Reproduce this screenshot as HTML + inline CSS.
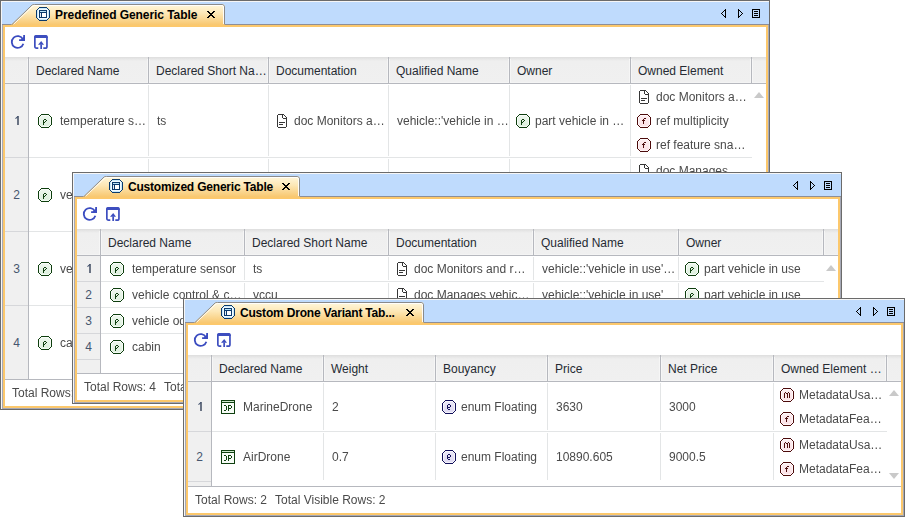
<!DOCTYPE html><html><head><meta charset="utf-8"><style>html,body{margin:0;padding:0;background:#fff;width:905px;height:517px;overflow:hidden;position:relative}.win{position:absolute;overflow:hidden}.r{position:absolute}.ic{position:absolute;display:block}.t{position:absolute;white-space:pre;font-family:"Liberation Sans", sans-serif;font-size:12px;line-height:14px}.g{will-change:transform}</style></head><body>
<div class="win" style="left:0px;top:0px;width:770px;height:410px">
<div class="r" style="left:0px;top:0px;width:770px;height:410px;background:#6b6b6b;"></div>
<div class="r" style="left:1px;top:1px;width:768px;height:408px;background:#f6f6f6;"></div>
<div class="r" style="left:2px;top:2px;width:767px;height:407px;background:#bfdbfd;"></div>
<div class="r" style="left:2px;top:24px;width:767px;height:385px;background:#a6a9b6;"></div>
<div class="r" style="left:2px;top:24px;width:767px;height:1px;background:#8e8e96;"></div>
<div class="r" style="left:3px;top:25px;width:765px;height:383px;background:#fcc86c;"></div>
<div class="r" style="left:5px;top:27px;width:761px;height:379px;background:#ffffff;"></div>
<svg class="ic" style="left:0;top:0" width="226" height="27" viewBox="0 0 226 27"><defs><linearGradient id="tg0" x1="0" y1="0" x2="0" y2="1"><stop offset="0" stop-color="#fff8df"/><stop offset="0.45" stop-color="#fde7b5"/><stop offset="1" stop-color="#f8c76f"/></linearGradient></defs><path d="M11 25L32 5Q33 4 35 4H222Q225 4 225 7V25Z" fill="url(#tg0)"/><path d="M12 24.5L32.2 4.9Q32.8 4.5 34.5 4.5H222Q224.5 4.5 224.5 7V24.5" fill="none" stroke="#8a8a8a" stroke-width="1"/><path d="M13.6 24.2L33 5.8Q33.5 5.5 34.5 5.5H222Q223.5 5.5 223.5 7V24" fill="none" stroke="#ffffff" stroke-width="1" opacity=".9"/></svg>
<div class="r" style="left:3px;top:25px;width:222px;height:2px;background:#fcc86c;"></div>
<svg class="ic" style="left:36px;top:7px" width="14" height="14" viewBox="0 0 14 14"><path d="M2.5 1H11.5L13 2.5V11.5L11.5 13H2.5L1 11.5V2.5Z" fill="#c9eafb"/><rect x="2.5" y="2.5" width="9" height="9" fill="none" stroke="#f2faff" stroke-width="1"/><rect x="4" y="4" width="6" height="1" fill="#b9e3f7"/><rect x="4" y="6" width="1" height="4" fill="#e6eef5"/><rect x="6" y="6" width="4" height="4" fill="#fff"/><path fill="#0b3a6c" shape-rendering="crispEdges" d="M3 0h8v1h-8zM2 1h1v1h-1zM11 1h1v1h-1zM1 2h1v1h-1zM12 2h1v1h-1zM0 3h1v1h-1zM3 3h8v1h-8zM13 3h1v1h-1zM0 4h1v1h-1zM3 4h1v1h-1zM10 4h1v1h-1zM13 4h1v1h-1zM0 5h1v1h-1zM3 5h8v1h-8zM13 5h1v1h-1zM0 6h1v1h-1zM3 6h1v1h-1zM5 6h1v1h-1zM10 6h1v1h-1zM13 6h1v1h-1zM0 7h1v1h-1zM3 7h1v1h-1zM5 7h1v1h-1zM10 7h1v1h-1zM13 7h1v1h-1zM0 8h1v1h-1zM3 8h1v1h-1zM5 8h1v1h-1zM10 8h1v1h-1zM13 8h1v1h-1zM0 9h1v1h-1zM3 9h1v1h-1zM5 9h1v1h-1zM10 9h1v1h-1zM13 9h1v1h-1zM0 10h1v1h-1zM3 10h8v1h-8zM13 10h1v1h-1zM1 11h1v1h-1zM12 11h1v1h-1zM2 12h1v1h-1zM11 12h1v1h-1zM3 13h8v1h-8z"/></svg>
<div class="t" style="left:55px;top:8px;color:#000;font-weight:bold;letter-spacing:-0.06px;">Predefined Generic Table</div>
<svg class="ic" style="left:207px;top:11px" width="8" height="7" viewBox="0 0 8 7"><path fill="#000" shape-rendering="crispEdges" d="M0 0h2v1h-2zM6 0h2v1h-2zM1 1h2v1h-2zM5 1h2v1h-2zM2 2h4v1h-4zM3 3h2v1h-2zM2 4h4v1h-4zM1 5h2v1h-2zM5 5h2v1h-2zM0 6h2v1h-2zM6 6h2v1h-2z"/></svg>
<svg class="ic" style="left:721px;top:9px" width="5" height="9" viewBox="0 0 5 9"><path fill="#000" shape-rendering="crispEdges" d="M4 0h1v1h-1zM3 1h2v1h-2zM2 2h1v1h-1zM4 2h1v1h-1zM1 3h1v1h-1zM4 3h1v1h-1zM0 4h1v1h-1zM4 4h1v1h-1zM1 5h1v1h-1zM4 5h1v1h-1zM2 6h1v1h-1zM4 6h1v1h-1zM3 7h2v1h-2zM4 8h1v1h-1z"/></svg><svg class="ic" style="left:738px;top:9px" width="5" height="9" viewBox="0 0 5 9"><path fill="#000" shape-rendering="crispEdges" d="M0 0h1v1h-1zM0 1h2v1h-2zM0 2h1v1h-1zM2 2h1v1h-1zM0 3h1v1h-1zM3 3h1v1h-1zM0 4h1v1h-1zM4 4h1v1h-1zM0 5h1v1h-1zM3 5h1v1h-1zM0 6h1v1h-1zM2 6h1v1h-1zM0 7h2v1h-2zM0 8h1v1h-1z"/></svg><svg class="ic" style="left:752px;top:9px" width="8" height="9" viewBox="0 0 8 9"><path fill="#000" shape-rendering="crispEdges" d="M0 0h8v1h-8zM0 1h1v1h-1zM7 1h1v1h-1zM0 2h1v1h-1zM2 2h4v1h-4zM7 2h1v1h-1zM0 3h1v1h-1zM7 3h1v1h-1zM0 4h1v1h-1zM2 4h4v1h-4zM7 4h1v1h-1zM0 5h1v1h-1zM7 5h1v1h-1zM0 6h1v1h-1zM2 6h4v1h-4zM7 6h1v1h-1zM0 7h1v1h-1zM7 7h1v1h-1zM0 8h8v1h-8z"/></svg>
<svg class="ic" style="left:10px;top:34px" width="16" height="16" viewBox="0 0 16 16"><path d="M13.34 9.72A5.9 5.9 0 1 1 12.91 5.23L14.1 6.1" fill="none" stroke="#3b4cc0" stroke-width="1.8"/><path d="M14.1 1.1V6.1H9.1" fill="none" stroke="#3b4cc0" stroke-width="1.8" stroke-linecap="butt"/><path d="M14.1 2.5V6.1H10.5Z" fill="#3b4cc0"/></svg>
<svg class="ic" style="left:34px;top:35px" width="14" height="14" viewBox="0 0 14 14"><path d="M4.3 13.15H2.6Q.85 13.15 .85 11.4V2.6Q.85 .85 2.6 .85H11.2Q12.95 .85 12.95 2.6V11.4Q12.95 13.15 11.2 13.15H9.3" fill="none" stroke="#3d4ebf" stroke-width="1.7"/><path d="M2.2 0H11.6Q13.8 0 13.8 2.2V2.9H0V2.2Q0 0 2.2 0Z" fill="#3d4ebf"/><path d="M7.2 6.1L10 9.8H4Z" fill="#3d4ebf"/><rect x="6.3" y="9.5" width="1.75" height="4.5" fill="#3d4ebf"/></svg>
<div class="r" style="left:5px;top:57px;width:761px;height:26px;background:#f0f0f0;background:linear-gradient(#dedede,#efefef 4px,#f0f0f0)"></div>
<div class="r" style="left:5px;top:83px;width:761px;height:1px;background:#b6b8be;"></div>
<div class="r" style="left:5px;top:82px;width:761px;height:1px;background:#f4f4f4;"></div>
<div class="r" style="left:27px;top:59px;width:1px;height:24px;background:#f6f6f6;"></div>
<div class="r" style="left:29px;top:59px;width:1px;height:24px;background:#f6f6f6;"></div>
<div class="r" style="left:28px;top:57px;width:1px;height:26px;background:#b6b8be;"></div>
<div class="r" style="left:147px;top:59px;width:1px;height:24px;background:#f6f6f6;"></div>
<div class="r" style="left:149px;top:59px;width:1px;height:24px;background:#f6f6f6;"></div>
<div class="r" style="left:148px;top:57px;width:1px;height:26px;background:#b6b8be;"></div>
<div class="r" style="left:267px;top:59px;width:1px;height:24px;background:#f6f6f6;"></div>
<div class="r" style="left:269px;top:59px;width:1px;height:24px;background:#f6f6f6;"></div>
<div class="r" style="left:268px;top:57px;width:1px;height:26px;background:#b6b8be;"></div>
<div class="r" style="left:387px;top:59px;width:1px;height:24px;background:#f6f6f6;"></div>
<div class="r" style="left:389px;top:59px;width:1px;height:24px;background:#f6f6f6;"></div>
<div class="r" style="left:388px;top:57px;width:1px;height:26px;background:#b6b8be;"></div>
<div class="r" style="left:508px;top:59px;width:1px;height:24px;background:#f6f6f6;"></div>
<div class="r" style="left:510px;top:59px;width:1px;height:24px;background:#f6f6f6;"></div>
<div class="r" style="left:509px;top:57px;width:1px;height:26px;background:#b6b8be;"></div>
<div class="r" style="left:629px;top:59px;width:1px;height:24px;background:#f6f6f6;"></div>
<div class="r" style="left:631px;top:59px;width:1px;height:24px;background:#f6f6f6;"></div>
<div class="r" style="left:630px;top:57px;width:1px;height:26px;background:#b6b8be;"></div>
<div class="r" style="left:750px;top:59px;width:1px;height:24px;background:#f6f6f6;"></div>
<div class="r" style="left:752px;top:59px;width:1px;height:24px;background:#f6f6f6;"></div>
<div class="r" style="left:751px;top:57px;width:1px;height:26px;background:#b6b8be;"></div>
<div class="t" style="left:36px;top:64px;color:#262b33;">Declared Name</div>
<div class="t" style="left:156px;top:64px;color:#262b33;">Declared Short Na…</div>
<div class="t" style="left:276px;top:64px;color:#262b33;">Documentation</div>
<div class="t" style="left:396px;top:64px;color:#262b33;">Qualified Name</div>
<div class="t" style="left:517px;top:64px;color:#262b33;">Owner</div>
<div class="t" style="left:638px;top:64px;color:#262b33;">Owned Element</div>
<div class="r" style="left:5px;top:84px;width:23px;height:295px;background:#f0f0f0;"></div>
<div class="r" style="left:28px;top:84px;width:1px;height:295px;background:#b6b8be;"></div>
<div class="r" style="left:5px;top:157px;width:23px;height:1px;background:#d6d7da;"></div>
<div class="r" style="left:29px;top:157px;width:723px;height:1px;background:#e3e5e6;"></div>
<div class="r" style="left:5px;top:231px;width:23px;height:1px;background:#d6d7da;"></div>
<div class="r" style="left:29px;top:231px;width:723px;height:1px;background:#e3e5e6;"></div>
<div class="r" style="left:5px;top:305px;width:23px;height:1px;background:#d6d7da;"></div>
<div class="r" style="left:29px;top:305px;width:723px;height:1px;background:#e3e5e6;"></div>
<div class="r" style="left:5px;top:379px;width:23px;height:1px;background:#d6d7da;"></div>
<div class="r" style="left:148px;top:85px;width:1px;height:71px;background:#e3e5e6;"></div>
<div class="r" style="left:148px;top:159px;width:1px;height:71px;background:#e3e5e6;"></div>
<div class="r" style="left:148px;top:233px;width:1px;height:71px;background:#e3e5e6;"></div>
<div class="r" style="left:148px;top:307px;width:1px;height:71px;background:#e3e5e6;"></div>
<div class="r" style="left:268px;top:85px;width:1px;height:71px;background:#e3e5e6;"></div>
<div class="r" style="left:268px;top:159px;width:1px;height:71px;background:#e3e5e6;"></div>
<div class="r" style="left:268px;top:233px;width:1px;height:71px;background:#e3e5e6;"></div>
<div class="r" style="left:268px;top:307px;width:1px;height:71px;background:#e3e5e6;"></div>
<div class="r" style="left:388px;top:85px;width:1px;height:71px;background:#e3e5e6;"></div>
<div class="r" style="left:388px;top:159px;width:1px;height:71px;background:#e3e5e6;"></div>
<div class="r" style="left:388px;top:233px;width:1px;height:71px;background:#e3e5e6;"></div>
<div class="r" style="left:388px;top:307px;width:1px;height:71px;background:#e3e5e6;"></div>
<div class="r" style="left:509px;top:85px;width:1px;height:71px;background:#e3e5e6;"></div>
<div class="r" style="left:509px;top:159px;width:1px;height:71px;background:#e3e5e6;"></div>
<div class="r" style="left:509px;top:233px;width:1px;height:71px;background:#e3e5e6;"></div>
<div class="r" style="left:509px;top:307px;width:1px;height:71px;background:#e3e5e6;"></div>
<div class="r" style="left:630px;top:85px;width:1px;height:71px;background:#e3e5e6;"></div>
<div class="r" style="left:630px;top:159px;width:1px;height:71px;background:#e3e5e6;"></div>
<div class="r" style="left:630px;top:233px;width:1px;height:71px;background:#e3e5e6;"></div>
<div class="r" style="left:630px;top:307px;width:1px;height:71px;background:#e3e5e6;"></div>
<svg class="ic" style="left:12px;top:116px" width="10" height="10" viewBox="0 0 10 10"><path d="M6 0V9" stroke="#23304a" stroke-width="1.3"/><path d="M3.5 2.7L6.1 .4" stroke="#42526e" stroke-width="1.05"/></svg>
<svg class="ic" style="left:38px;top:114px" width="14" height="14" viewBox="0 0 14 14"><defs><linearGradient id="g1" x1="0" y1="0" x2="0" y2="1"><stop offset="0" stop-color="#eef7ee"/><stop offset="1" stop-color="#dcefdc"/></linearGradient></defs><path d="M2.5 1H11.5L13 2.5V11.5L11.5 13H2.5L1 11.5V2.5Z" fill="url(#g1)"/><path d="M3.2 1.6H10.8L12.4 3.2V10.8L10.8 12.4H3.2L1.6 10.8V3.2Z" fill="none" stroke="#fff" stroke-opacity=".75" stroke-width="1"/><path fill="#0f3f0f" shape-rendering="crispEdges" d="M3 0h8v1h-8zM2 1h1v1h-1zM11 1h1v1h-1zM1 2h1v1h-1zM12 2h1v1h-1zM0 3h1v1h-1zM13 3h1v1h-1zM0 4h1v1h-1zM13 4h1v1h-1zM0 5h1v1h-1zM13 5h1v1h-1zM0 6h1v1h-1zM13 6h1v1h-1zM0 7h1v1h-1zM13 7h1v1h-1zM0 8h1v1h-1zM13 8h1v1h-1zM0 9h1v1h-1zM13 9h1v1h-1zM0 10h1v1h-1zM13 10h1v1h-1zM1 11h1v1h-1zM12 11h1v1h-1zM2 12h1v1h-1zM11 12h1v1h-1zM3 13h8v1h-8z"/><path fill="#0f3f0f" shape-rendering="crispEdges" d="M6 5h2v1h-2zM5 6h1v1h-1zM8 6h1v1h-1zM5 7h1v1h-1zM7 7h1v1h-1zM5 8h2v1h-2zM5 9h1v1h-1zM5 10h1v1h-1z"/></svg><div class="t g" style="left:60px;top:114px;color:#4a4a4a;">temperature s…</div>
<div class="t g" style="left:157px;top:114px;color:#4a4a4a;">ts</div>
<svg class="ic" style="left:277px;top:114px" width="10" height="14" viewBox="0 0 10 14"><path d="M1 1H6L9 4V13H1Z" fill="#fff"/><path fill="#363636" shape-rendering="crispEdges" d="M1 0h6v1h-6zM0 1h1v1h-1zM5 1h1v1h-1zM7 1h1v1h-1zM0 2h1v1h-1zM5 2h1v1h-1zM8 2h1v1h-1zM0 3h1v1h-1zM5 3h1v1h-1zM9 3h1v1h-1zM0 4h1v1h-1zM6 4h4v1h-4zM0 5h1v1h-1zM9 5h1v1h-1zM0 6h1v1h-1zM9 6h1v1h-1zM0 7h1v1h-1zM9 7h1v1h-1zM0 8h1v1h-1zM2 8h6v1h-6zM9 8h1v1h-1zM0 9h1v1h-1zM9 9h1v1h-1zM0 10h1v1h-1zM2 10h4v1h-4zM9 10h1v1h-1zM0 11h1v1h-1zM9 11h1v1h-1zM0 12h1v1h-1zM9 12h1v1h-1zM1 13h8v1h-8z"/></svg><div class="t g" style="left:294px;top:114px;color:#4a4a4a;">doc Monitors a…</div>
<div class="t g" style="left:397px;top:114px;color:#4a4a4a;">vehicle::'vehicle in …</div>
<svg class="ic" style="left:516px;top:114px" width="14" height="14" viewBox="0 0 14 14"><defs><linearGradient id="g2" x1="0" y1="0" x2="0" y2="1"><stop offset="0" stop-color="#eef7ee"/><stop offset="1" stop-color="#dcefdc"/></linearGradient></defs><path d="M2.5 1H11.5L13 2.5V11.5L11.5 13H2.5L1 11.5V2.5Z" fill="url(#g2)"/><path d="M3.2 1.6H10.8L12.4 3.2V10.8L10.8 12.4H3.2L1.6 10.8V3.2Z" fill="none" stroke="#fff" stroke-opacity=".75" stroke-width="1"/><path fill="#0f3f0f" shape-rendering="crispEdges" d="M3 0h8v1h-8zM2 1h1v1h-1zM11 1h1v1h-1zM1 2h1v1h-1zM12 2h1v1h-1zM0 3h1v1h-1zM13 3h1v1h-1zM0 4h1v1h-1zM13 4h1v1h-1zM0 5h1v1h-1zM13 5h1v1h-1zM0 6h1v1h-1zM13 6h1v1h-1zM0 7h1v1h-1zM13 7h1v1h-1zM0 8h1v1h-1zM13 8h1v1h-1zM0 9h1v1h-1zM13 9h1v1h-1zM0 10h1v1h-1zM13 10h1v1h-1zM1 11h1v1h-1zM12 11h1v1h-1zM2 12h1v1h-1zM11 12h1v1h-1zM3 13h8v1h-8z"/><path fill="#0f3f0f" shape-rendering="crispEdges" d="M6 5h2v1h-2zM5 6h1v1h-1zM8 6h1v1h-1zM5 7h1v1h-1zM7 7h1v1h-1zM5 8h2v1h-2zM5 9h1v1h-1zM5 10h1v1h-1z"/></svg><div class="t g" style="left:535px;top:114px;color:#4a4a4a;">part vehicle in …</div>
<svg class="ic" style="left:639px;top:90px" width="10" height="14" viewBox="0 0 10 14"><path d="M1 1H6L9 4V13H1Z" fill="#fff"/><path fill="#363636" shape-rendering="crispEdges" d="M1 0h6v1h-6zM0 1h1v1h-1zM5 1h1v1h-1zM7 1h1v1h-1zM0 2h1v1h-1zM5 2h1v1h-1zM8 2h1v1h-1zM0 3h1v1h-1zM5 3h1v1h-1zM9 3h1v1h-1zM0 4h1v1h-1zM6 4h4v1h-4zM0 5h1v1h-1zM9 5h1v1h-1zM0 6h1v1h-1zM9 6h1v1h-1zM0 7h1v1h-1zM9 7h1v1h-1zM0 8h1v1h-1zM2 8h6v1h-6zM9 8h1v1h-1zM0 9h1v1h-1zM9 9h1v1h-1zM0 10h1v1h-1zM2 10h4v1h-4zM9 10h1v1h-1zM0 11h1v1h-1zM9 11h1v1h-1zM0 12h1v1h-1zM9 12h1v1h-1zM1 13h8v1h-8z"/></svg><div class="t g" style="left:656px;top:90px;color:#4a4a4a;">doc Monitors a…</div>
<svg class="ic" style="left:637px;top:114px" width="14" height="14" viewBox="0 0 14 14"><defs><linearGradient id="g3" x1="0" y1="0" x2="0" y2="1"><stop offset="0" stop-color="#fdeef1"/><stop offset="1" stop-color="#fbdfe4"/></linearGradient></defs><path d="M2.5 1H11.5L13 2.5V11.5L11.5 13H2.5L1 11.5V2.5Z" fill="url(#g3)"/><path d="M3.2 1.6H10.8L12.4 3.2V10.8L10.8 12.4H3.2L1.6 10.8V3.2Z" fill="none" stroke="#fff" stroke-opacity=".75" stroke-width="1"/><path fill="#4d0c0c" shape-rendering="crispEdges" d="M3 0h8v1h-8zM2 1h1v1h-1zM11 1h1v1h-1zM1 2h1v1h-1zM12 2h1v1h-1zM0 3h1v1h-1zM13 3h1v1h-1zM0 4h1v1h-1zM13 4h1v1h-1zM0 5h1v1h-1zM13 5h1v1h-1zM0 6h1v1h-1zM13 6h1v1h-1zM0 7h1v1h-1zM13 7h1v1h-1zM0 8h1v1h-1zM13 8h1v1h-1zM0 9h1v1h-1zM13 9h1v1h-1zM0 10h1v1h-1zM13 10h1v1h-1zM1 11h1v1h-1zM12 11h1v1h-1zM2 12h1v1h-1zM11 12h1v1h-1zM3 13h8v1h-8z"/><path fill="#4d0c0c" shape-rendering="crispEdges" d="M7 4h2v1h-2zM6 5h1v1h-1zM5 6h3v1h-3zM6 7h1v1h-1zM6 8h1v1h-1zM6 9h1v1h-1z"/></svg><div class="t g" style="left:656px;top:114px;color:#4a4a4a;">ref multiplicity</div>
<svg class="ic" style="left:637px;top:138px" width="14" height="14" viewBox="0 0 14 14"><defs><linearGradient id="g4" x1="0" y1="0" x2="0" y2="1"><stop offset="0" stop-color="#fdeef1"/><stop offset="1" stop-color="#fbdfe4"/></linearGradient></defs><path d="M2.5 1H11.5L13 2.5V11.5L11.5 13H2.5L1 11.5V2.5Z" fill="url(#g4)"/><path d="M3.2 1.6H10.8L12.4 3.2V10.8L10.8 12.4H3.2L1.6 10.8V3.2Z" fill="none" stroke="#fff" stroke-opacity=".75" stroke-width="1"/><path fill="#4d0c0c" shape-rendering="crispEdges" d="M3 0h8v1h-8zM2 1h1v1h-1zM11 1h1v1h-1zM1 2h1v1h-1zM12 2h1v1h-1zM0 3h1v1h-1zM13 3h1v1h-1zM0 4h1v1h-1zM13 4h1v1h-1zM0 5h1v1h-1zM13 5h1v1h-1zM0 6h1v1h-1zM13 6h1v1h-1zM0 7h1v1h-1zM13 7h1v1h-1zM0 8h1v1h-1zM13 8h1v1h-1zM0 9h1v1h-1zM13 9h1v1h-1zM0 10h1v1h-1zM13 10h1v1h-1zM1 11h1v1h-1zM12 11h1v1h-1zM2 12h1v1h-1zM11 12h1v1h-1zM3 13h8v1h-8z"/><path fill="#4d0c0c" shape-rendering="crispEdges" d="M7 4h2v1h-2zM6 5h1v1h-1zM5 6h3v1h-3zM6 7h1v1h-1zM6 8h1v1h-1zM6 9h1v1h-1z"/></svg><div class="t g" style="left:656px;top:138px;color:#4a4a4a;">ref feature sna…</div>
<svg class="ic" style="left:754px;top:92px" width="10" height="6" viewBox="0 0 10 6"><path d="M5 0L10 6H0Z" fill="#c9c9c9"/></svg>
<div class="t" style="left:5px;top:188px;color:#46566e;width:23px;text-align:center;">2</div>
<svg class="ic" style="left:38px;top:188px" width="14" height="14" viewBox="0 0 14 14"><defs><linearGradient id="g5" x1="0" y1="0" x2="0" y2="1"><stop offset="0" stop-color="#eef7ee"/><stop offset="1" stop-color="#dcefdc"/></linearGradient></defs><path d="M2.5 1H11.5L13 2.5V11.5L11.5 13H2.5L1 11.5V2.5Z" fill="url(#g5)"/><path d="M3.2 1.6H10.8L12.4 3.2V10.8L10.8 12.4H3.2L1.6 10.8V3.2Z" fill="none" stroke="#fff" stroke-opacity=".75" stroke-width="1"/><path fill="#0f3f0f" shape-rendering="crispEdges" d="M3 0h8v1h-8zM2 1h1v1h-1zM11 1h1v1h-1zM1 2h1v1h-1zM12 2h1v1h-1zM0 3h1v1h-1zM13 3h1v1h-1zM0 4h1v1h-1zM13 4h1v1h-1zM0 5h1v1h-1zM13 5h1v1h-1zM0 6h1v1h-1zM13 6h1v1h-1zM0 7h1v1h-1zM13 7h1v1h-1zM0 8h1v1h-1zM13 8h1v1h-1zM0 9h1v1h-1zM13 9h1v1h-1zM0 10h1v1h-1zM13 10h1v1h-1zM1 11h1v1h-1zM12 11h1v1h-1zM2 12h1v1h-1zM11 12h1v1h-1zM3 13h8v1h-8z"/><path fill="#0f3f0f" shape-rendering="crispEdges" d="M6 5h2v1h-2zM5 6h1v1h-1zM8 6h1v1h-1zM5 7h1v1h-1zM7 7h1v1h-1zM5 8h2v1h-2zM5 9h1v1h-1zM5 10h1v1h-1z"/></svg><div class="t g" style="left:60px;top:188px;color:#4a4a4a;">vehicle control &amp; c…</div>
<div class="t" style="left:5px;top:262px;color:#46566e;width:23px;text-align:center;">3</div>
<svg class="ic" style="left:38px;top:262px" width="14" height="14" viewBox="0 0 14 14"><defs><linearGradient id="g6" x1="0" y1="0" x2="0" y2="1"><stop offset="0" stop-color="#eef7ee"/><stop offset="1" stop-color="#dcefdc"/></linearGradient></defs><path d="M2.5 1H11.5L13 2.5V11.5L11.5 13H2.5L1 11.5V2.5Z" fill="url(#g6)"/><path d="M3.2 1.6H10.8L12.4 3.2V10.8L10.8 12.4H3.2L1.6 10.8V3.2Z" fill="none" stroke="#fff" stroke-opacity=".75" stroke-width="1"/><path fill="#0f3f0f" shape-rendering="crispEdges" d="M3 0h8v1h-8zM2 1h1v1h-1zM11 1h1v1h-1zM1 2h1v1h-1zM12 2h1v1h-1zM0 3h1v1h-1zM13 3h1v1h-1zM0 4h1v1h-1zM13 4h1v1h-1zM0 5h1v1h-1zM13 5h1v1h-1zM0 6h1v1h-1zM13 6h1v1h-1zM0 7h1v1h-1zM13 7h1v1h-1zM0 8h1v1h-1zM13 8h1v1h-1zM0 9h1v1h-1zM13 9h1v1h-1zM0 10h1v1h-1zM13 10h1v1h-1zM1 11h1v1h-1zM12 11h1v1h-1zM2 12h1v1h-1zM11 12h1v1h-1zM3 13h8v1h-8z"/><path fill="#0f3f0f" shape-rendering="crispEdges" d="M6 5h2v1h-2zM5 6h1v1h-1zM8 6h1v1h-1zM5 7h1v1h-1zM7 7h1v1h-1zM5 8h2v1h-2zM5 9h1v1h-1zM5 10h1v1h-1z"/></svg><div class="t g" style="left:60px;top:262px;color:#4a4a4a;">vehicle odometer</div>
<div class="t" style="left:5px;top:336px;color:#46566e;width:23px;text-align:center;">4</div>
<svg class="ic" style="left:38px;top:336px" width="14" height="14" viewBox="0 0 14 14"><defs><linearGradient id="g7" x1="0" y1="0" x2="0" y2="1"><stop offset="0" stop-color="#eef7ee"/><stop offset="1" stop-color="#dcefdc"/></linearGradient></defs><path d="M2.5 1H11.5L13 2.5V11.5L11.5 13H2.5L1 11.5V2.5Z" fill="url(#g7)"/><path d="M3.2 1.6H10.8L12.4 3.2V10.8L10.8 12.4H3.2L1.6 10.8V3.2Z" fill="none" stroke="#fff" stroke-opacity=".75" stroke-width="1"/><path fill="#0f3f0f" shape-rendering="crispEdges" d="M3 0h8v1h-8zM2 1h1v1h-1zM11 1h1v1h-1zM1 2h1v1h-1zM12 2h1v1h-1zM0 3h1v1h-1zM13 3h1v1h-1zM0 4h1v1h-1zM13 4h1v1h-1zM0 5h1v1h-1zM13 5h1v1h-1zM0 6h1v1h-1zM13 6h1v1h-1zM0 7h1v1h-1zM13 7h1v1h-1zM0 8h1v1h-1zM13 8h1v1h-1zM0 9h1v1h-1zM13 9h1v1h-1zM0 10h1v1h-1zM13 10h1v1h-1zM1 11h1v1h-1zM12 11h1v1h-1zM2 12h1v1h-1zM11 12h1v1h-1zM3 13h8v1h-8z"/><path fill="#0f3f0f" shape-rendering="crispEdges" d="M6 5h2v1h-2zM5 6h1v1h-1zM8 6h1v1h-1zM5 7h1v1h-1zM7 7h1v1h-1zM5 8h2v1h-2zM5 9h1v1h-1zM5 10h1v1h-1z"/></svg><div class="t g" style="left:60px;top:336px;color:#4a4a4a;">cabin</div>
<svg class="ic" style="left:639px;top:164px" width="10" height="14" viewBox="0 0 10 14"><path d="M1 1H6L9 4V13H1Z" fill="#fff"/><path fill="#363636" shape-rendering="crispEdges" d="M1 0h6v1h-6zM0 1h1v1h-1zM5 1h1v1h-1zM7 1h1v1h-1zM0 2h1v1h-1zM5 2h1v1h-1zM8 2h1v1h-1zM0 3h1v1h-1zM5 3h1v1h-1zM9 3h1v1h-1zM0 4h1v1h-1zM6 4h4v1h-4zM0 5h1v1h-1zM9 5h1v1h-1zM0 6h1v1h-1zM9 6h1v1h-1zM0 7h1v1h-1zM9 7h1v1h-1zM0 8h1v1h-1zM2 8h6v1h-6zM9 8h1v1h-1zM0 9h1v1h-1zM9 9h1v1h-1zM0 10h1v1h-1zM2 10h4v1h-4zM9 10h1v1h-1zM0 11h1v1h-1zM9 11h1v1h-1zM0 12h1v1h-1zM9 12h1v1h-1zM1 13h8v1h-8z"/></svg><div class="t g" style="left:656px;top:164px;color:#4a4a4a;">doc Manages…</div>
<div class="r" style="left:5px;top:379px;width:761px;height:1px;background:#b6b8be;"></div>
<div class="t g" style="left:12px;top:386px;color:#4a4a4a;">Total Rows: 4</div>
<div class="t g" style="left:92.2px;top:386px;color:#4a4a4a;">Total Visible Rows: 4</div>
</div>
<div class="win" style="left:72px;top:172px;width:770px;height:232px">
<div class="r" style="left:0px;top:0px;width:770px;height:232px;background:#6b6b6b;"></div>
<div class="r" style="left:1px;top:1px;width:768px;height:230px;background:#f6f6f6;"></div>
<div class="r" style="left:2px;top:2px;width:767px;height:229px;background:#bfdbfd;"></div>
<div class="r" style="left:2px;top:24px;width:767px;height:207px;background:#a6a9b6;"></div>
<div class="r" style="left:2px;top:24px;width:767px;height:1px;background:#8e8e96;"></div>
<div class="r" style="left:3px;top:25px;width:765px;height:205px;background:#fcc86c;"></div>
<div class="r" style="left:5px;top:27px;width:761px;height:201px;background:#ffffff;"></div>
<svg class="ic" style="left:0;top:0" width="229" height="27" viewBox="0 0 229 27"><defs><linearGradient id="tg72" x1="0" y1="0" x2="0" y2="1"><stop offset="0" stop-color="#fff8df"/><stop offset="0.45" stop-color="#fde7b5"/><stop offset="1" stop-color="#f8c76f"/></linearGradient></defs><path d="M11 25L32 5Q33 4 35 4H225Q228 4 228 7V25Z" fill="url(#tg72)"/><path d="M12 24.5L32.2 4.9Q32.8 4.5 34.5 4.5H225Q227.5 4.5 227.5 7V24.5" fill="none" stroke="#8a8a8a" stroke-width="1"/><path d="M13.6 24.2L33 5.8Q33.5 5.5 34.5 5.5H225Q226.5 5.5 226.5 7V24" fill="none" stroke="#ffffff" stroke-width="1" opacity=".9"/></svg>
<div class="r" style="left:3px;top:25px;width:225px;height:2px;background:#fcc86c;"></div>
<svg class="ic" style="left:37px;top:7px" width="14" height="14" viewBox="0 0 14 14"><path d="M2.5 1H11.5L13 2.5V11.5L11.5 13H2.5L1 11.5V2.5Z" fill="#c9eafb"/><rect x="2.5" y="2.5" width="9" height="9" fill="none" stroke="#f2faff" stroke-width="1"/><rect x="4" y="4" width="6" height="1" fill="#b9e3f7"/><rect x="4" y="6" width="1" height="4" fill="#e6eef5"/><rect x="6" y="6" width="4" height="4" fill="#fff"/><path fill="#0b3a6c" shape-rendering="crispEdges" d="M3 0h8v1h-8zM2 1h1v1h-1zM11 1h1v1h-1zM1 2h1v1h-1zM12 2h1v1h-1zM0 3h1v1h-1zM3 3h8v1h-8zM13 3h1v1h-1zM0 4h1v1h-1zM3 4h1v1h-1zM10 4h1v1h-1zM13 4h1v1h-1zM0 5h1v1h-1zM3 5h8v1h-8zM13 5h1v1h-1zM0 6h1v1h-1zM3 6h1v1h-1zM5 6h1v1h-1zM10 6h1v1h-1zM13 6h1v1h-1zM0 7h1v1h-1zM3 7h1v1h-1zM5 7h1v1h-1zM10 7h1v1h-1zM13 7h1v1h-1zM0 8h1v1h-1zM3 8h1v1h-1zM5 8h1v1h-1zM10 8h1v1h-1zM13 8h1v1h-1zM0 9h1v1h-1zM3 9h1v1h-1zM5 9h1v1h-1zM10 9h1v1h-1zM13 9h1v1h-1zM0 10h1v1h-1zM3 10h8v1h-8zM13 10h1v1h-1zM1 11h1v1h-1zM12 11h1v1h-1zM2 12h1v1h-1zM11 12h1v1h-1zM3 13h8v1h-8z"/></svg>
<div class="t" style="left:56px;top:8px;color:#000;font-weight:bold;letter-spacing:-0.2px;">Customized Generic Table</div>
<svg class="ic" style="left:210px;top:11px" width="8" height="7" viewBox="0 0 8 7"><path fill="#000" shape-rendering="crispEdges" d="M0 0h2v1h-2zM6 0h2v1h-2zM1 1h2v1h-2zM5 1h2v1h-2zM2 2h4v1h-4zM3 3h2v1h-2zM2 4h4v1h-4zM1 5h2v1h-2zM5 5h2v1h-2zM0 6h2v1h-2zM6 6h2v1h-2z"/></svg>
<svg class="ic" style="left:721px;top:9px" width="5" height="9" viewBox="0 0 5 9"><path fill="#000" shape-rendering="crispEdges" d="M4 0h1v1h-1zM3 1h2v1h-2zM2 2h1v1h-1zM4 2h1v1h-1zM1 3h1v1h-1zM4 3h1v1h-1zM0 4h1v1h-1zM4 4h1v1h-1zM1 5h1v1h-1zM4 5h1v1h-1zM2 6h1v1h-1zM4 6h1v1h-1zM3 7h2v1h-2zM4 8h1v1h-1z"/></svg><svg class="ic" style="left:738px;top:9px" width="5" height="9" viewBox="0 0 5 9"><path fill="#000" shape-rendering="crispEdges" d="M0 0h1v1h-1zM0 1h2v1h-2zM0 2h1v1h-1zM2 2h1v1h-1zM0 3h1v1h-1zM3 3h1v1h-1zM0 4h1v1h-1zM4 4h1v1h-1zM0 5h1v1h-1zM3 5h1v1h-1zM0 6h1v1h-1zM2 6h1v1h-1zM0 7h2v1h-2zM0 8h1v1h-1z"/></svg><svg class="ic" style="left:752px;top:9px" width="8" height="9" viewBox="0 0 8 9"><path fill="#000" shape-rendering="crispEdges" d="M0 0h8v1h-8zM0 1h1v1h-1zM7 1h1v1h-1zM0 2h1v1h-1zM2 2h4v1h-4zM7 2h1v1h-1zM0 3h1v1h-1zM7 3h1v1h-1zM0 4h1v1h-1zM2 4h4v1h-4zM7 4h1v1h-1zM0 5h1v1h-1zM7 5h1v1h-1zM0 6h1v1h-1zM2 6h4v1h-4zM7 6h1v1h-1zM0 7h1v1h-1zM7 7h1v1h-1zM0 8h8v1h-8z"/></svg>
<svg class="ic" style="left:10px;top:34px" width="16" height="16" viewBox="0 0 16 16"><path d="M13.34 9.72A5.9 5.9 0 1 1 12.91 5.23L14.1 6.1" fill="none" stroke="#3b4cc0" stroke-width="1.8"/><path d="M14.1 1.1V6.1H9.1" fill="none" stroke="#3b4cc0" stroke-width="1.8" stroke-linecap="butt"/><path d="M14.1 2.5V6.1H10.5Z" fill="#3b4cc0"/></svg>
<svg class="ic" style="left:34px;top:35px" width="14" height="14" viewBox="0 0 14 14"><path d="M4.3 13.15H2.6Q.85 13.15 .85 11.4V2.6Q.85 .85 2.6 .85H11.2Q12.95 .85 12.95 2.6V11.4Q12.95 13.15 11.2 13.15H9.3" fill="none" stroke="#3d4ebf" stroke-width="1.7"/><path d="M2.2 0H11.6Q13.8 0 13.8 2.2V2.9H0V2.2Q0 0 2.2 0Z" fill="#3d4ebf"/><path d="M7.2 6.1L10 9.8H4Z" fill="#3d4ebf"/><rect x="6.3" y="9.5" width="1.75" height="4.5" fill="#3d4ebf"/></svg>
<div class="r" style="left:5px;top:57px;width:761px;height:26px;background:#f0f0f0;background:linear-gradient(#dedede,#efefef 4px,#f0f0f0)"></div>
<div class="r" style="left:5px;top:83px;width:761px;height:1px;background:#b6b8be;"></div>
<div class="r" style="left:5px;top:82px;width:761px;height:1px;background:#f4f4f4;"></div>
<div class="r" style="left:27px;top:59px;width:1px;height:24px;background:#f6f6f6;"></div>
<div class="r" style="left:29px;top:59px;width:1px;height:24px;background:#f6f6f6;"></div>
<div class="r" style="left:28px;top:57px;width:1px;height:26px;background:#b6b8be;"></div>
<div class="r" style="left:171px;top:59px;width:1px;height:24px;background:#f6f6f6;"></div>
<div class="r" style="left:173px;top:59px;width:1px;height:24px;background:#f6f6f6;"></div>
<div class="r" style="left:172px;top:57px;width:1px;height:26px;background:#b6b8be;"></div>
<div class="r" style="left:315px;top:59px;width:1px;height:24px;background:#f6f6f6;"></div>
<div class="r" style="left:317px;top:59px;width:1px;height:24px;background:#f6f6f6;"></div>
<div class="r" style="left:316px;top:57px;width:1px;height:26px;background:#b6b8be;"></div>
<div class="r" style="left:460px;top:59px;width:1px;height:24px;background:#f6f6f6;"></div>
<div class="r" style="left:462px;top:59px;width:1px;height:24px;background:#f6f6f6;"></div>
<div class="r" style="left:461px;top:57px;width:1px;height:26px;background:#b6b8be;"></div>
<div class="r" style="left:605px;top:59px;width:1px;height:24px;background:#f6f6f6;"></div>
<div class="r" style="left:607px;top:59px;width:1px;height:24px;background:#f6f6f6;"></div>
<div class="r" style="left:606px;top:57px;width:1px;height:26px;background:#b6b8be;"></div>
<div class="r" style="left:750px;top:59px;width:1px;height:24px;background:#f6f6f6;"></div>
<div class="r" style="left:752px;top:59px;width:1px;height:24px;background:#f6f6f6;"></div>
<div class="r" style="left:751px;top:57px;width:1px;height:26px;background:#b6b8be;"></div>
<div class="t" style="left:36px;top:64px;color:#262b33;">Declared Name</div>
<div class="t" style="left:180px;top:64px;color:#262b33;">Declared Short Name</div>
<div class="t" style="left:324px;top:64px;color:#262b33;">Documentation</div>
<div class="t" style="left:469px;top:64px;color:#262b33;">Qualified Name</div>
<div class="t" style="left:614px;top:64px;color:#262b33;">Owner</div>
<div class="r" style="left:5px;top:84px;width:23px;height:117px;background:#f0f0f0;"></div>
<div class="r" style="left:28px;top:84px;width:1px;height:117px;background:#b6b8be;"></div>
<div class="r" style="left:5px;top:109px;width:23px;height:1px;background:#d6d7da;"></div>
<div class="r" style="left:29px;top:109px;width:723px;height:1px;background:#e3e5e6;"></div>
<div class="r" style="left:5px;top:135px;width:23px;height:1px;background:#d6d7da;"></div>
<div class="r" style="left:29px;top:135px;width:723px;height:1px;background:#e3e5e6;"></div>
<div class="r" style="left:5px;top:161px;width:23px;height:1px;background:#d6d7da;"></div>
<div class="r" style="left:29px;top:161px;width:723px;height:1px;background:#e3e5e6;"></div>
<div class="r" style="left:5px;top:187px;width:23px;height:1px;background:#d6d7da;"></div>
<div class="r" style="left:172px;top:85px;width:1px;height:23px;background:#e3e5e6;"></div>
<div class="r" style="left:172px;top:111px;width:1px;height:23px;background:#e3e5e6;"></div>
<div class="r" style="left:172px;top:137px;width:1px;height:23px;background:#e3e5e6;"></div>
<div class="r" style="left:172px;top:163px;width:1px;height:23px;background:#e3e5e6;"></div>
<div class="r" style="left:316px;top:85px;width:1px;height:23px;background:#e3e5e6;"></div>
<div class="r" style="left:316px;top:111px;width:1px;height:23px;background:#e3e5e6;"></div>
<div class="r" style="left:316px;top:137px;width:1px;height:23px;background:#e3e5e6;"></div>
<div class="r" style="left:316px;top:163px;width:1px;height:23px;background:#e3e5e6;"></div>
<div class="r" style="left:461px;top:85px;width:1px;height:23px;background:#e3e5e6;"></div>
<div class="r" style="left:461px;top:111px;width:1px;height:23px;background:#e3e5e6;"></div>
<div class="r" style="left:461px;top:137px;width:1px;height:23px;background:#e3e5e6;"></div>
<div class="r" style="left:461px;top:163px;width:1px;height:23px;background:#e3e5e6;"></div>
<div class="r" style="left:606px;top:85px;width:1px;height:23px;background:#e3e5e6;"></div>
<div class="r" style="left:606px;top:111px;width:1px;height:23px;background:#e3e5e6;"></div>
<div class="r" style="left:606px;top:137px;width:1px;height:23px;background:#e3e5e6;"></div>
<div class="r" style="left:606px;top:163px;width:1px;height:23px;background:#e3e5e6;"></div>
<svg class="ic" style="left:12px;top:92px" width="10" height="10" viewBox="0 0 10 10"><path d="M6 0V9" stroke="#23304a" stroke-width="1.3"/><path d="M3.5 2.7L6.1 .4" stroke="#42526e" stroke-width="1.05"/></svg>
<svg class="ic" style="left:38px;top:90px" width="14" height="14" viewBox="0 0 14 14"><defs><linearGradient id="g8" x1="0" y1="0" x2="0" y2="1"><stop offset="0" stop-color="#eef7ee"/><stop offset="1" stop-color="#dcefdc"/></linearGradient></defs><path d="M2.5 1H11.5L13 2.5V11.5L11.5 13H2.5L1 11.5V2.5Z" fill="url(#g8)"/><path d="M3.2 1.6H10.8L12.4 3.2V10.8L10.8 12.4H3.2L1.6 10.8V3.2Z" fill="none" stroke="#fff" stroke-opacity=".75" stroke-width="1"/><path fill="#0f3f0f" shape-rendering="crispEdges" d="M3 0h8v1h-8zM2 1h1v1h-1zM11 1h1v1h-1zM1 2h1v1h-1zM12 2h1v1h-1zM0 3h1v1h-1zM13 3h1v1h-1zM0 4h1v1h-1zM13 4h1v1h-1zM0 5h1v1h-1zM13 5h1v1h-1zM0 6h1v1h-1zM13 6h1v1h-1zM0 7h1v1h-1zM13 7h1v1h-1zM0 8h1v1h-1zM13 8h1v1h-1zM0 9h1v1h-1zM13 9h1v1h-1zM0 10h1v1h-1zM13 10h1v1h-1zM1 11h1v1h-1zM12 11h1v1h-1zM2 12h1v1h-1zM11 12h1v1h-1zM3 13h8v1h-8z"/><path fill="#0f3f0f" shape-rendering="crispEdges" d="M6 5h2v1h-2zM5 6h1v1h-1zM8 6h1v1h-1zM5 7h1v1h-1zM7 7h1v1h-1zM5 8h2v1h-2zM5 9h1v1h-1zM5 10h1v1h-1z"/></svg><div class="t g" style="left:60px;top:90px;color:#4a4a4a;">temperature sensor</div>
<div class="t g" style="left:181px;top:90px;color:#4a4a4a;">ts</div>
<svg class="ic" style="left:325px;top:90px" width="10" height="14" viewBox="0 0 10 14"><path d="M1 1H6L9 4V13H1Z" fill="#fff"/><path fill="#363636" shape-rendering="crispEdges" d="M1 0h6v1h-6zM0 1h1v1h-1zM5 1h1v1h-1zM7 1h1v1h-1zM0 2h1v1h-1zM5 2h1v1h-1zM8 2h1v1h-1zM0 3h1v1h-1zM5 3h1v1h-1zM9 3h1v1h-1zM0 4h1v1h-1zM6 4h4v1h-4zM0 5h1v1h-1zM9 5h1v1h-1zM0 6h1v1h-1zM9 6h1v1h-1zM0 7h1v1h-1zM9 7h1v1h-1zM0 8h1v1h-1zM2 8h6v1h-6zM9 8h1v1h-1zM0 9h1v1h-1zM9 9h1v1h-1zM0 10h1v1h-1zM2 10h4v1h-4zM9 10h1v1h-1zM0 11h1v1h-1zM9 11h1v1h-1zM0 12h1v1h-1zM9 12h1v1h-1zM1 13h8v1h-8z"/></svg><div class="t g" style="left:342px;top:90px;color:#4a4a4a;">doc Monitors and r…</div>
<div class="t g" style="left:470px;top:90px;color:#4a4a4a;">vehicle::'vehicle in use'…</div>
<svg class="ic" style="left:613px;top:90px" width="14" height="14" viewBox="0 0 14 14"><defs><linearGradient id="g9" x1="0" y1="0" x2="0" y2="1"><stop offset="0" stop-color="#eef7ee"/><stop offset="1" stop-color="#dcefdc"/></linearGradient></defs><path d="M2.5 1H11.5L13 2.5V11.5L11.5 13H2.5L1 11.5V2.5Z" fill="url(#g9)"/><path d="M3.2 1.6H10.8L12.4 3.2V10.8L10.8 12.4H3.2L1.6 10.8V3.2Z" fill="none" stroke="#fff" stroke-opacity=".75" stroke-width="1"/><path fill="#0f3f0f" shape-rendering="crispEdges" d="M3 0h8v1h-8zM2 1h1v1h-1zM11 1h1v1h-1zM1 2h1v1h-1zM12 2h1v1h-1zM0 3h1v1h-1zM13 3h1v1h-1zM0 4h1v1h-1zM13 4h1v1h-1zM0 5h1v1h-1zM13 5h1v1h-1zM0 6h1v1h-1zM13 6h1v1h-1zM0 7h1v1h-1zM13 7h1v1h-1zM0 8h1v1h-1zM13 8h1v1h-1zM0 9h1v1h-1zM13 9h1v1h-1zM0 10h1v1h-1zM13 10h1v1h-1zM1 11h1v1h-1zM12 11h1v1h-1zM2 12h1v1h-1zM11 12h1v1h-1zM3 13h8v1h-8z"/><path fill="#0f3f0f" shape-rendering="crispEdges" d="M6 5h2v1h-2zM5 6h1v1h-1zM8 6h1v1h-1zM5 7h1v1h-1zM7 7h1v1h-1zM5 8h2v1h-2zM5 9h1v1h-1zM5 10h1v1h-1z"/></svg><div class="t g" style="left:632px;top:90px;color:#4a4a4a;">part vehicle in use</div>
<div class="t" style="left:5px;top:116px;color:#46566e;width:23px;text-align:center;">2</div>
<svg class="ic" style="left:38px;top:116px" width="14" height="14" viewBox="0 0 14 14"><defs><linearGradient id="g10" x1="0" y1="0" x2="0" y2="1"><stop offset="0" stop-color="#eef7ee"/><stop offset="1" stop-color="#dcefdc"/></linearGradient></defs><path d="M2.5 1H11.5L13 2.5V11.5L11.5 13H2.5L1 11.5V2.5Z" fill="url(#g10)"/><path d="M3.2 1.6H10.8L12.4 3.2V10.8L10.8 12.4H3.2L1.6 10.8V3.2Z" fill="none" stroke="#fff" stroke-opacity=".75" stroke-width="1"/><path fill="#0f3f0f" shape-rendering="crispEdges" d="M3 0h8v1h-8zM2 1h1v1h-1zM11 1h1v1h-1zM1 2h1v1h-1zM12 2h1v1h-1zM0 3h1v1h-1zM13 3h1v1h-1zM0 4h1v1h-1zM13 4h1v1h-1zM0 5h1v1h-1zM13 5h1v1h-1zM0 6h1v1h-1zM13 6h1v1h-1zM0 7h1v1h-1zM13 7h1v1h-1zM0 8h1v1h-1zM13 8h1v1h-1zM0 9h1v1h-1zM13 9h1v1h-1zM0 10h1v1h-1zM13 10h1v1h-1zM1 11h1v1h-1zM12 11h1v1h-1zM2 12h1v1h-1zM11 12h1v1h-1zM3 13h8v1h-8z"/><path fill="#0f3f0f" shape-rendering="crispEdges" d="M6 5h2v1h-2zM5 6h1v1h-1zM8 6h1v1h-1zM5 7h1v1h-1zM7 7h1v1h-1zM5 8h2v1h-2zM5 9h1v1h-1zM5 10h1v1h-1z"/></svg><div class="t g" style="left:60px;top:116px;color:#4a4a4a;">vehicle control &amp; c…</div>
<div class="t g" style="left:181px;top:116px;color:#4a4a4a;">vccu</div>
<svg class="ic" style="left:325px;top:116px" width="10" height="14" viewBox="0 0 10 14"><path d="M1 1H6L9 4V13H1Z" fill="#fff"/><path fill="#363636" shape-rendering="crispEdges" d="M1 0h6v1h-6zM0 1h1v1h-1zM5 1h1v1h-1zM7 1h1v1h-1zM0 2h1v1h-1zM5 2h1v1h-1zM8 2h1v1h-1zM0 3h1v1h-1zM5 3h1v1h-1zM9 3h1v1h-1zM0 4h1v1h-1zM6 4h4v1h-4zM0 5h1v1h-1zM9 5h1v1h-1zM0 6h1v1h-1zM9 6h1v1h-1zM0 7h1v1h-1zM9 7h1v1h-1zM0 8h1v1h-1zM2 8h6v1h-6zM9 8h1v1h-1zM0 9h1v1h-1zM9 9h1v1h-1zM0 10h1v1h-1zM2 10h4v1h-4zM9 10h1v1h-1zM0 11h1v1h-1zM9 11h1v1h-1zM0 12h1v1h-1zM9 12h1v1h-1zM1 13h8v1h-8z"/></svg><div class="t g" style="left:342px;top:116px;color:#4a4a4a;">doc Manages vehic…</div>
<div class="t g" style="left:470px;top:116px;color:#4a4a4a;">vehicle::'vehicle in use'</div>
<svg class="ic" style="left:613px;top:116px" width="14" height="14" viewBox="0 0 14 14"><defs><linearGradient id="g11" x1="0" y1="0" x2="0" y2="1"><stop offset="0" stop-color="#eef7ee"/><stop offset="1" stop-color="#dcefdc"/></linearGradient></defs><path d="M2.5 1H11.5L13 2.5V11.5L11.5 13H2.5L1 11.5V2.5Z" fill="url(#g11)"/><path d="M3.2 1.6H10.8L12.4 3.2V10.8L10.8 12.4H3.2L1.6 10.8V3.2Z" fill="none" stroke="#fff" stroke-opacity=".75" stroke-width="1"/><path fill="#0f3f0f" shape-rendering="crispEdges" d="M3 0h8v1h-8zM2 1h1v1h-1zM11 1h1v1h-1zM1 2h1v1h-1zM12 2h1v1h-1zM0 3h1v1h-1zM13 3h1v1h-1zM0 4h1v1h-1zM13 4h1v1h-1zM0 5h1v1h-1zM13 5h1v1h-1zM0 6h1v1h-1zM13 6h1v1h-1zM0 7h1v1h-1zM13 7h1v1h-1zM0 8h1v1h-1zM13 8h1v1h-1zM0 9h1v1h-1zM13 9h1v1h-1zM0 10h1v1h-1zM13 10h1v1h-1zM1 11h1v1h-1zM12 11h1v1h-1zM2 12h1v1h-1zM11 12h1v1h-1zM3 13h8v1h-8z"/><path fill="#0f3f0f" shape-rendering="crispEdges" d="M6 5h2v1h-2zM5 6h1v1h-1zM8 6h1v1h-1zM5 7h1v1h-1zM7 7h1v1h-1zM5 8h2v1h-2zM5 9h1v1h-1zM5 10h1v1h-1z"/></svg><div class="t g" style="left:632px;top:116px;color:#4a4a4a;">part vehicle in use</div>
<div class="t" style="left:5px;top:142px;color:#46566e;width:23px;text-align:center;">3</div>
<svg class="ic" style="left:38px;top:142px" width="14" height="14" viewBox="0 0 14 14"><defs><linearGradient id="g12" x1="0" y1="0" x2="0" y2="1"><stop offset="0" stop-color="#eef7ee"/><stop offset="1" stop-color="#dcefdc"/></linearGradient></defs><path d="M2.5 1H11.5L13 2.5V11.5L11.5 13H2.5L1 11.5V2.5Z" fill="url(#g12)"/><path d="M3.2 1.6H10.8L12.4 3.2V10.8L10.8 12.4H3.2L1.6 10.8V3.2Z" fill="none" stroke="#fff" stroke-opacity=".75" stroke-width="1"/><path fill="#0f3f0f" shape-rendering="crispEdges" d="M3 0h8v1h-8zM2 1h1v1h-1zM11 1h1v1h-1zM1 2h1v1h-1zM12 2h1v1h-1zM0 3h1v1h-1zM13 3h1v1h-1zM0 4h1v1h-1zM13 4h1v1h-1zM0 5h1v1h-1zM13 5h1v1h-1zM0 6h1v1h-1zM13 6h1v1h-1zM0 7h1v1h-1zM13 7h1v1h-1zM0 8h1v1h-1zM13 8h1v1h-1zM0 9h1v1h-1zM13 9h1v1h-1zM0 10h1v1h-1zM13 10h1v1h-1zM1 11h1v1h-1zM12 11h1v1h-1zM2 12h1v1h-1zM11 12h1v1h-1zM3 13h8v1h-8z"/><path fill="#0f3f0f" shape-rendering="crispEdges" d="M6 5h2v1h-2zM5 6h1v1h-1zM8 6h1v1h-1zM5 7h1v1h-1zM7 7h1v1h-1zM5 8h2v1h-2zM5 9h1v1h-1zM5 10h1v1h-1z"/></svg><div class="t g" style="left:60px;top:142px;color:#4a4a4a;">vehicle odometer</div>
<div class="t g" style="left:181px;top:142px;color:#4a4a4a;">vo</div>
<svg class="ic" style="left:325px;top:142px" width="10" height="14" viewBox="0 0 10 14"><path d="M1 1H6L9 4V13H1Z" fill="#fff"/><path fill="#363636" shape-rendering="crispEdges" d="M1 0h6v1h-6zM0 1h1v1h-1zM5 1h1v1h-1zM7 1h1v1h-1zM0 2h1v1h-1zM5 2h1v1h-1zM8 2h1v1h-1zM0 3h1v1h-1zM5 3h1v1h-1zM9 3h1v1h-1zM0 4h1v1h-1zM6 4h4v1h-4zM0 5h1v1h-1zM9 5h1v1h-1zM0 6h1v1h-1zM9 6h1v1h-1zM0 7h1v1h-1zM9 7h1v1h-1zM0 8h1v1h-1zM2 8h6v1h-6zM9 8h1v1h-1zM0 9h1v1h-1zM9 9h1v1h-1zM0 10h1v1h-1zM2 10h4v1h-4zM9 10h1v1h-1zM0 11h1v1h-1zM9 11h1v1h-1zM0 12h1v1h-1zM9 12h1v1h-1zM1 13h8v1h-8z"/></svg><div class="t g" style="left:342px;top:142px;color:#4a4a4a;">doc Tracks distanc…</div>
<div class="t g" style="left:470px;top:142px;color:#4a4a4a;">vehicle::'vehicle in use'</div>
<svg class="ic" style="left:613px;top:142px" width="14" height="14" viewBox="0 0 14 14"><defs><linearGradient id="g13" x1="0" y1="0" x2="0" y2="1"><stop offset="0" stop-color="#eef7ee"/><stop offset="1" stop-color="#dcefdc"/></linearGradient></defs><path d="M2.5 1H11.5L13 2.5V11.5L11.5 13H2.5L1 11.5V2.5Z" fill="url(#g13)"/><path d="M3.2 1.6H10.8L12.4 3.2V10.8L10.8 12.4H3.2L1.6 10.8V3.2Z" fill="none" stroke="#fff" stroke-opacity=".75" stroke-width="1"/><path fill="#0f3f0f" shape-rendering="crispEdges" d="M3 0h8v1h-8zM2 1h1v1h-1zM11 1h1v1h-1zM1 2h1v1h-1zM12 2h1v1h-1zM0 3h1v1h-1zM13 3h1v1h-1zM0 4h1v1h-1zM13 4h1v1h-1zM0 5h1v1h-1zM13 5h1v1h-1zM0 6h1v1h-1zM13 6h1v1h-1zM0 7h1v1h-1zM13 7h1v1h-1zM0 8h1v1h-1zM13 8h1v1h-1zM0 9h1v1h-1zM13 9h1v1h-1zM0 10h1v1h-1zM13 10h1v1h-1zM1 11h1v1h-1zM12 11h1v1h-1zM2 12h1v1h-1zM11 12h1v1h-1zM3 13h8v1h-8z"/><path fill="#0f3f0f" shape-rendering="crispEdges" d="M6 5h2v1h-2zM5 6h1v1h-1zM8 6h1v1h-1zM5 7h1v1h-1zM7 7h1v1h-1zM5 8h2v1h-2zM5 9h1v1h-1zM5 10h1v1h-1z"/></svg><div class="t g" style="left:632px;top:142px;color:#4a4a4a;">part vehicle in use</div>
<div class="t" style="left:5px;top:168px;color:#46566e;width:23px;text-align:center;">4</div>
<svg class="ic" style="left:38px;top:168px" width="14" height="14" viewBox="0 0 14 14"><defs><linearGradient id="g14" x1="0" y1="0" x2="0" y2="1"><stop offset="0" stop-color="#eef7ee"/><stop offset="1" stop-color="#dcefdc"/></linearGradient></defs><path d="M2.5 1H11.5L13 2.5V11.5L11.5 13H2.5L1 11.5V2.5Z" fill="url(#g14)"/><path d="M3.2 1.6H10.8L12.4 3.2V10.8L10.8 12.4H3.2L1.6 10.8V3.2Z" fill="none" stroke="#fff" stroke-opacity=".75" stroke-width="1"/><path fill="#0f3f0f" shape-rendering="crispEdges" d="M3 0h8v1h-8zM2 1h1v1h-1zM11 1h1v1h-1zM1 2h1v1h-1zM12 2h1v1h-1zM0 3h1v1h-1zM13 3h1v1h-1zM0 4h1v1h-1zM13 4h1v1h-1zM0 5h1v1h-1zM13 5h1v1h-1zM0 6h1v1h-1zM13 6h1v1h-1zM0 7h1v1h-1zM13 7h1v1h-1zM0 8h1v1h-1zM13 8h1v1h-1zM0 9h1v1h-1zM13 9h1v1h-1zM0 10h1v1h-1zM13 10h1v1h-1zM1 11h1v1h-1zM12 11h1v1h-1zM2 12h1v1h-1zM11 12h1v1h-1zM3 13h8v1h-8z"/><path fill="#0f3f0f" shape-rendering="crispEdges" d="M6 5h2v1h-2zM5 6h1v1h-1zM8 6h1v1h-1zM5 7h1v1h-1zM7 7h1v1h-1zM5 8h2v1h-2zM5 9h1v1h-1zM5 10h1v1h-1z"/></svg><div class="t g" style="left:60px;top:168px;color:#4a4a4a;">cabin</div>
<div class="t g" style="left:181px;top:168px;color:#4a4a4a;">cb</div>
<svg class="ic" style="left:325px;top:168px" width="10" height="14" viewBox="0 0 10 14"><path d="M1 1H6L9 4V13H1Z" fill="#fff"/><path fill="#363636" shape-rendering="crispEdges" d="M1 0h6v1h-6zM0 1h1v1h-1zM5 1h1v1h-1zM7 1h1v1h-1zM0 2h1v1h-1zM5 2h1v1h-1zM8 2h1v1h-1zM0 3h1v1h-1zM5 3h1v1h-1zM9 3h1v1h-1zM0 4h1v1h-1zM6 4h4v1h-4zM0 5h1v1h-1zM9 5h1v1h-1zM0 6h1v1h-1zM9 6h1v1h-1zM0 7h1v1h-1zM9 7h1v1h-1zM0 8h1v1h-1zM2 8h6v1h-6zM9 8h1v1h-1zM0 9h1v1h-1zM9 9h1v1h-1zM0 10h1v1h-1zM2 10h4v1h-4zM9 10h1v1h-1zM0 11h1v1h-1zM9 11h1v1h-1zM0 12h1v1h-1zM9 12h1v1h-1zM1 13h8v1h-8z"/></svg><div class="t g" style="left:342px;top:168px;color:#4a4a4a;">doc Passenger ca…</div>
<div class="t g" style="left:470px;top:168px;color:#4a4a4a;">vehicle::'vehicle in use'</div>
<svg class="ic" style="left:613px;top:168px" width="14" height="14" viewBox="0 0 14 14"><defs><linearGradient id="g15" x1="0" y1="0" x2="0" y2="1"><stop offset="0" stop-color="#eef7ee"/><stop offset="1" stop-color="#dcefdc"/></linearGradient></defs><path d="M2.5 1H11.5L13 2.5V11.5L11.5 13H2.5L1 11.5V2.5Z" fill="url(#g15)"/><path d="M3.2 1.6H10.8L12.4 3.2V10.8L10.8 12.4H3.2L1.6 10.8V3.2Z" fill="none" stroke="#fff" stroke-opacity=".75" stroke-width="1"/><path fill="#0f3f0f" shape-rendering="crispEdges" d="M3 0h8v1h-8zM2 1h1v1h-1zM11 1h1v1h-1zM1 2h1v1h-1zM12 2h1v1h-1zM0 3h1v1h-1zM13 3h1v1h-1zM0 4h1v1h-1zM13 4h1v1h-1zM0 5h1v1h-1zM13 5h1v1h-1zM0 6h1v1h-1zM13 6h1v1h-1zM0 7h1v1h-1zM13 7h1v1h-1zM0 8h1v1h-1zM13 8h1v1h-1zM0 9h1v1h-1zM13 9h1v1h-1zM0 10h1v1h-1zM13 10h1v1h-1zM1 11h1v1h-1zM12 11h1v1h-1zM2 12h1v1h-1zM11 12h1v1h-1zM3 13h8v1h-8z"/><path fill="#0f3f0f" shape-rendering="crispEdges" d="M6 5h2v1h-2zM5 6h1v1h-1zM8 6h1v1h-1zM5 7h1v1h-1zM7 7h1v1h-1zM5 8h2v1h-2zM5 9h1v1h-1zM5 10h1v1h-1z"/></svg><div class="t g" style="left:632px;top:168px;color:#4a4a4a;">part vehicle in use</div>
<svg class="ic" style="left:754px;top:93px" width="10" height="6" viewBox="0 0 10 6"><path d="M5 0L10 6H0Z" fill="#c9c9c9"/></svg>
<div class="r" style="left:5px;top:201px;width:761px;height:1px;background:#b6b8be;"></div>
<div class="t g" style="left:12px;top:208px;color:#4a4a4a;">Total Rows: 4</div>
<div class="t g" style="left:92.2px;top:208px;color:#4a4a4a;">Total Visible Rows: 4</div>
</div>
<div class="win" style="left:183px;top:298px;width:722px;height:219px">
<div class="r" style="left:0px;top:0px;width:722px;height:219px;background:#6b6b6b;"></div>
<div class="r" style="left:1px;top:1px;width:720px;height:217px;background:#f6f6f6;"></div>
<div class="r" style="left:2px;top:2px;width:719px;height:216px;background:#bfdbfd;"></div>
<div class="r" style="left:2px;top:24px;width:719px;height:194px;background:#a6a9b6;"></div>
<div class="r" style="left:2px;top:24px;width:719px;height:1px;background:#8e8e96;"></div>
<div class="r" style="left:3px;top:25px;width:717px;height:192px;background:#fcc86c;"></div>
<div class="r" style="left:5px;top:27px;width:713px;height:188px;background:#ffffff;"></div>
<svg class="ic" style="left:0;top:0" width="242" height="27" viewBox="0 0 242 27"><defs><linearGradient id="tg183" x1="0" y1="0" x2="0" y2="1"><stop offset="0" stop-color="#fff8df"/><stop offset="0.45" stop-color="#fde7b5"/><stop offset="1" stop-color="#f8c76f"/></linearGradient></defs><path d="M11 25L32 5Q33 4 35 4H238Q241 4 241 7V25Z" fill="url(#tg183)"/><path d="M12 24.5L32.2 4.9Q32.8 4.5 34.5 4.5H238Q240.5 4.5 240.5 7V24.5" fill="none" stroke="#8a8a8a" stroke-width="1"/><path d="M13.6 24.2L33 5.8Q33.5 5.5 34.5 5.5H238Q239.5 5.5 239.5 7V24" fill="none" stroke="#ffffff" stroke-width="1" opacity=".9"/></svg>
<div class="r" style="left:3px;top:25px;width:238px;height:2px;background:#fcc86c;"></div>
<svg class="ic" style="left:38px;top:7px" width="14" height="14" viewBox="0 0 14 14"><path d="M2.5 1H11.5L13 2.5V11.5L11.5 13H2.5L1 11.5V2.5Z" fill="#c9eafb"/><rect x="2.5" y="2.5" width="9" height="9" fill="none" stroke="#f2faff" stroke-width="1"/><rect x="4" y="4" width="6" height="1" fill="#b9e3f7"/><rect x="4" y="6" width="1" height="4" fill="#e6eef5"/><rect x="6" y="6" width="4" height="4" fill="#fff"/><path fill="#0b3a6c" shape-rendering="crispEdges" d="M3 0h8v1h-8zM2 1h1v1h-1zM11 1h1v1h-1zM1 2h1v1h-1zM12 2h1v1h-1zM0 3h1v1h-1zM3 3h8v1h-8zM13 3h1v1h-1zM0 4h1v1h-1zM3 4h1v1h-1zM10 4h1v1h-1zM13 4h1v1h-1zM0 5h1v1h-1zM3 5h8v1h-8zM13 5h1v1h-1zM0 6h1v1h-1zM3 6h1v1h-1zM5 6h1v1h-1zM10 6h1v1h-1zM13 6h1v1h-1zM0 7h1v1h-1zM3 7h1v1h-1zM5 7h1v1h-1zM10 7h1v1h-1zM13 7h1v1h-1zM0 8h1v1h-1zM3 8h1v1h-1zM5 8h1v1h-1zM10 8h1v1h-1zM13 8h1v1h-1zM0 9h1v1h-1zM3 9h1v1h-1zM5 9h1v1h-1zM10 9h1v1h-1zM13 9h1v1h-1zM0 10h1v1h-1zM3 10h8v1h-8zM13 10h1v1h-1zM1 11h1v1h-1zM12 11h1v1h-1zM2 12h1v1h-1zM11 12h1v1h-1zM3 13h8v1h-8z"/></svg>
<div class="t" style="left:57px;top:8px;color:#000;font-weight:bold;letter-spacing:-0.19px;">Custom Drone Variant Tab...</div>
<svg class="ic" style="left:223px;top:11px" width="8" height="7" viewBox="0 0 8 7"><path fill="#000" shape-rendering="crispEdges" d="M0 0h2v1h-2zM6 0h2v1h-2zM1 1h2v1h-2zM5 1h2v1h-2zM2 2h4v1h-4zM3 3h2v1h-2zM2 4h4v1h-4zM1 5h2v1h-2zM5 5h2v1h-2zM0 6h2v1h-2zM6 6h2v1h-2z"/></svg>
<svg class="ic" style="left:673px;top:9px" width="5" height="9" viewBox="0 0 5 9"><path fill="#000" shape-rendering="crispEdges" d="M4 0h1v1h-1zM3 1h2v1h-2zM2 2h1v1h-1zM4 2h1v1h-1zM1 3h1v1h-1zM4 3h1v1h-1zM0 4h1v1h-1zM4 4h1v1h-1zM1 5h1v1h-1zM4 5h1v1h-1zM2 6h1v1h-1zM4 6h1v1h-1zM3 7h2v1h-2zM4 8h1v1h-1z"/></svg><svg class="ic" style="left:690px;top:9px" width="5" height="9" viewBox="0 0 5 9"><path fill="#000" shape-rendering="crispEdges" d="M0 0h1v1h-1zM0 1h2v1h-2zM0 2h1v1h-1zM2 2h1v1h-1zM0 3h1v1h-1zM3 3h1v1h-1zM0 4h1v1h-1zM4 4h1v1h-1zM0 5h1v1h-1zM3 5h1v1h-1zM0 6h1v1h-1zM2 6h1v1h-1zM0 7h2v1h-2zM0 8h1v1h-1z"/></svg><svg class="ic" style="left:704px;top:9px" width="8" height="9" viewBox="0 0 8 9"><path fill="#000" shape-rendering="crispEdges" d="M0 0h8v1h-8zM0 1h1v1h-1zM7 1h1v1h-1zM0 2h1v1h-1zM2 2h4v1h-4zM7 2h1v1h-1zM0 3h1v1h-1zM7 3h1v1h-1zM0 4h1v1h-1zM2 4h4v1h-4zM7 4h1v1h-1zM0 5h1v1h-1zM7 5h1v1h-1zM0 6h1v1h-1zM2 6h4v1h-4zM7 6h1v1h-1zM0 7h1v1h-1zM7 7h1v1h-1zM0 8h8v1h-8z"/></svg>
<svg class="ic" style="left:10px;top:34px" width="16" height="16" viewBox="0 0 16 16"><path d="M13.34 9.72A5.9 5.9 0 1 1 12.91 5.23L14.1 6.1" fill="none" stroke="#3b4cc0" stroke-width="1.8"/><path d="M14.1 1.1V6.1H9.1" fill="none" stroke="#3b4cc0" stroke-width="1.8" stroke-linecap="butt"/><path d="M14.1 2.5V6.1H10.5Z" fill="#3b4cc0"/></svg>
<svg class="ic" style="left:34px;top:35px" width="14" height="14" viewBox="0 0 14 14"><path d="M4.3 13.15H2.6Q.85 13.15 .85 11.4V2.6Q.85 .85 2.6 .85H11.2Q12.95 .85 12.95 2.6V11.4Q12.95 13.15 11.2 13.15H9.3" fill="none" stroke="#3d4ebf" stroke-width="1.7"/><path d="M2.2 0H11.6Q13.8 0 13.8 2.2V2.9H0V2.2Q0 0 2.2 0Z" fill="#3d4ebf"/><path d="M7.2 6.1L10 9.8H4Z" fill="#3d4ebf"/><rect x="6.3" y="9.5" width="1.75" height="4.5" fill="#3d4ebf"/></svg>
<div class="r" style="left:5px;top:57px;width:713px;height:26px;background:#f0f0f0;background:linear-gradient(#dedede,#efefef 4px,#f0f0f0)"></div>
<div class="r" style="left:5px;top:83px;width:713px;height:1px;background:#b6b8be;"></div>
<div class="r" style="left:5px;top:82px;width:713px;height:1px;background:#f4f4f4;"></div>
<div class="r" style="left:27px;top:59px;width:1px;height:24px;background:#f6f6f6;"></div>
<div class="r" style="left:29px;top:59px;width:1px;height:24px;background:#f6f6f6;"></div>
<div class="r" style="left:28px;top:57px;width:1px;height:26px;background:#b6b8be;"></div>
<div class="r" style="left:139px;top:59px;width:1px;height:24px;background:#f6f6f6;"></div>
<div class="r" style="left:141px;top:59px;width:1px;height:24px;background:#f6f6f6;"></div>
<div class="r" style="left:140px;top:57px;width:1px;height:26px;background:#b6b8be;"></div>
<div class="r" style="left:251px;top:59px;width:1px;height:24px;background:#f6f6f6;"></div>
<div class="r" style="left:253px;top:59px;width:1px;height:24px;background:#f6f6f6;"></div>
<div class="r" style="left:252px;top:57px;width:1px;height:26px;background:#b6b8be;"></div>
<div class="r" style="left:363px;top:59px;width:1px;height:24px;background:#f6f6f6;"></div>
<div class="r" style="left:365px;top:59px;width:1px;height:24px;background:#f6f6f6;"></div>
<div class="r" style="left:364px;top:57px;width:1px;height:26px;background:#b6b8be;"></div>
<div class="r" style="left:476px;top:59px;width:1px;height:24px;background:#f6f6f6;"></div>
<div class="r" style="left:478px;top:59px;width:1px;height:24px;background:#f6f6f6;"></div>
<div class="r" style="left:477px;top:57px;width:1px;height:26px;background:#b6b8be;"></div>
<div class="r" style="left:589px;top:59px;width:1px;height:24px;background:#f6f6f6;"></div>
<div class="r" style="left:591px;top:59px;width:1px;height:24px;background:#f6f6f6;"></div>
<div class="r" style="left:590px;top:57px;width:1px;height:26px;background:#b6b8be;"></div>
<div class="r" style="left:702px;top:59px;width:1px;height:24px;background:#f6f6f6;"></div>
<div class="r" style="left:704px;top:59px;width:1px;height:24px;background:#f6f6f6;"></div>
<div class="r" style="left:703px;top:57px;width:1px;height:26px;background:#b6b8be;"></div>
<div class="t" style="left:36px;top:64px;color:#262b33;">Declared Name</div>
<div class="t" style="left:148px;top:64px;color:#262b33;">Weight</div>
<div class="t" style="left:260px;top:64px;color:#262b33;">Bouyancy</div>
<div class="t" style="left:372px;top:64px;color:#262b33;">Price</div>
<div class="t" style="left:485px;top:64px;color:#262b33;">Net Price</div>
<div class="t" style="left:598px;top:64px;color:#262b33;">Owned Element …</div>
<div class="r" style="left:5px;top:84px;width:23px;height:104px;background:#f0f0f0;"></div>
<div class="r" style="left:28px;top:84px;width:1px;height:104px;background:#b6b8be;"></div>
<div class="r" style="left:5px;top:133px;width:23px;height:1px;background:#d6d7da;"></div>
<div class="r" style="left:29px;top:133px;width:675px;height:1px;background:#e3e5e6;"></div>
<div class="r" style="left:5px;top:183px;width:23px;height:1px;background:#d6d7da;"></div>
<div class="r" style="left:140px;top:85px;width:1px;height:47px;background:#e3e5e6;"></div>
<div class="r" style="left:140px;top:135px;width:1px;height:47px;background:#e3e5e6;"></div>
<div class="r" style="left:252px;top:85px;width:1px;height:47px;background:#e3e5e6;"></div>
<div class="r" style="left:252px;top:135px;width:1px;height:47px;background:#e3e5e6;"></div>
<div class="r" style="left:364px;top:85px;width:1px;height:47px;background:#e3e5e6;"></div>
<div class="r" style="left:364px;top:135px;width:1px;height:47px;background:#e3e5e6;"></div>
<div class="r" style="left:477px;top:85px;width:1px;height:47px;background:#e3e5e6;"></div>
<div class="r" style="left:477px;top:135px;width:1px;height:47px;background:#e3e5e6;"></div>
<div class="r" style="left:590px;top:85px;width:1px;height:47px;background:#e3e5e6;"></div>
<div class="r" style="left:590px;top:135px;width:1px;height:47px;background:#e3e5e6;"></div>
<svg class="ic" style="left:12px;top:104px" width="10" height="10" viewBox="0 0 10 10"><path d="M6 0V9" stroke="#23304a" stroke-width="1.3"/><path d="M3.5 2.7L6.1 .4" stroke="#42526e" stroke-width="1.05"/></svg>
<svg class="ic" style="left:38px;top:102px" width="14" height="14" viewBox="0 0 14 14"><rect x="1" y="1" width="12" height="1" fill="#cfe9cf"/><rect x="1" y="3" width="12" height="10" fill="#f7fcf7"/><path fill="#0f3f0f" shape-rendering="crispEdges" d="M0 0h14v1h-14zM0 1h1v1h-1zM13 1h1v1h-1zM0 2h14v1h-14zM0 3h1v1h-1zM13 3h1v1h-1zM0 4h1v1h-1zM13 4h1v1h-1zM0 5h1v1h-1zM13 5h1v1h-1zM0 6h1v1h-1zM13 6h1v1h-1zM0 7h1v1h-1zM13 7h1v1h-1zM0 8h1v1h-1zM13 8h1v1h-1zM0 9h1v1h-1zM13 9h1v1h-1zM0 10h1v1h-1zM13 10h1v1h-1zM0 11h1v1h-1zM13 11h1v1h-1zM0 12h1v1h-1zM13 12h1v1h-1zM0 13h14v1h-14z"/><path fill="#0f3f0f" shape-rendering="crispEdges" d="M3 5h2v1h-2zM7 5h3v1h-3zM5 6h1v1h-1zM7 6h1v1h-1zM10 6h1v1h-1zM5 7h1v1h-1zM7 7h1v1h-1zM10 7h1v1h-1zM5 8h1v1h-1zM7 8h3v1h-3zM5 9h1v1h-1zM7 9h1v1h-1zM3 10h2v1h-2zM7 10h1v1h-1z"/></svg><div class="t g" style="left:60px;top:102px;color:#4a4a4a;">MarineDrone</div>
<div class="t g" style="left:149px;top:102px;color:#4a4a4a;">2</div>
<svg class="ic" style="left:259px;top:102px" width="14" height="14" viewBox="0 0 14 14"><defs><linearGradient id="g16" x1="0" y1="0" x2="0" y2="1"><stop offset="0" stop-color="#ebe8f7"/><stop offset="1" stop-color="#ddd8f1"/></linearGradient></defs><path d="M2.5 1H11.5L13 2.5V11.5L11.5 13H2.5L1 11.5V2.5Z" fill="url(#g16)"/><path d="M3.2 1.6H10.8L12.4 3.2V10.8L10.8 12.4H3.2L1.6 10.8V3.2Z" fill="none" stroke="#fff" stroke-opacity=".75" stroke-width="1"/><path fill="#12105a" shape-rendering="crispEdges" d="M3 0h8v1h-8zM2 1h1v1h-1zM11 1h1v1h-1zM1 2h1v1h-1zM12 2h1v1h-1zM0 3h1v1h-1zM13 3h1v1h-1zM0 4h1v1h-1zM13 4h1v1h-1zM0 5h1v1h-1zM13 5h1v1h-1zM0 6h1v1h-1zM13 6h1v1h-1zM0 7h1v1h-1zM13 7h1v1h-1zM0 8h1v1h-1zM13 8h1v1h-1zM0 9h1v1h-1zM13 9h1v1h-1zM0 10h1v1h-1zM13 10h1v1h-1zM1 11h1v1h-1zM12 11h1v1h-1zM2 12h1v1h-1zM11 12h1v1h-1zM3 13h8v1h-8z"/><path fill="#12105a" shape-rendering="crispEdges" d="M6 4h2v1h-2zM5 5h1v1h-1zM8 5h1v1h-1zM5 6h1v1h-1zM8 6h1v1h-1zM5 7h3v1h-3zM5 8h1v1h-1zM6 9h2v1h-2z"/></svg><div class="t g" style="left:278px;top:102px;color:#4a4a4a;">enum Floating</div>
<div class="t g" style="left:373px;top:102px;color:#4a4a4a;">3630</div>
<div class="t g" style="left:486px;top:102px;color:#4a4a4a;">3000</div>
<svg class="ic" style="left:597px;top:90px" width="14" height="14" viewBox="0 0 14 14"><defs><linearGradient id="g17" x1="0" y1="0" x2="0" y2="1"><stop offset="0" stop-color="#fdeef1"/><stop offset="1" stop-color="#fbdfe4"/></linearGradient></defs><path d="M2.5 1H11.5L13 2.5V11.5L11.5 13H2.5L1 11.5V2.5Z" fill="url(#g17)"/><path d="M3.2 1.6H10.8L12.4 3.2V10.8L10.8 12.4H3.2L1.6 10.8V3.2Z" fill="none" stroke="#fff" stroke-opacity=".75" stroke-width="1"/><path fill="#4d0c0c" shape-rendering="crispEdges" d="M3 0h8v1h-8zM2 1h1v1h-1zM11 1h1v1h-1zM1 2h1v1h-1zM12 2h1v1h-1zM0 3h1v1h-1zM13 3h1v1h-1zM0 4h1v1h-1zM13 4h1v1h-1zM0 5h1v1h-1zM13 5h1v1h-1zM0 6h1v1h-1zM13 6h1v1h-1zM0 7h1v1h-1zM13 7h1v1h-1zM0 8h1v1h-1zM13 8h1v1h-1zM0 9h1v1h-1zM13 9h1v1h-1zM0 10h1v1h-1zM13 10h1v1h-1zM1 11h1v1h-1zM12 11h1v1h-1zM2 12h1v1h-1zM11 12h1v1h-1zM3 13h8v1h-8z"/><path fill="#4d0c0c" shape-rendering="crispEdges" d="M5 4h1v1h-1zM8 4h1v1h-1zM4 5h1v1h-1zM6 5h2v1h-2zM9 5h1v1h-1zM4 6h1v1h-1zM7 6h1v1h-1zM9 6h1v1h-1zM4 7h1v1h-1zM7 7h1v1h-1zM9 7h1v1h-1zM4 8h1v1h-1zM7 8h1v1h-1zM9 8h1v1h-1zM4 9h1v1h-1zM7 9h1v1h-1zM9 9h1v1h-1z"/></svg><div class="t g" style="left:616px;top:90px;color:#4a4a4a;">MetadataUsa…</div>
<svg class="ic" style="left:597px;top:114px" width="14" height="14" viewBox="0 0 14 14"><defs><linearGradient id="g18" x1="0" y1="0" x2="0" y2="1"><stop offset="0" stop-color="#fdeef1"/><stop offset="1" stop-color="#fbdfe4"/></linearGradient></defs><path d="M2.5 1H11.5L13 2.5V11.5L11.5 13H2.5L1 11.5V2.5Z" fill="url(#g18)"/><path d="M3.2 1.6H10.8L12.4 3.2V10.8L10.8 12.4H3.2L1.6 10.8V3.2Z" fill="none" stroke="#fff" stroke-opacity=".75" stroke-width="1"/><path fill="#4d0c0c" shape-rendering="crispEdges" d="M3 0h8v1h-8zM2 1h1v1h-1zM11 1h1v1h-1zM1 2h1v1h-1zM12 2h1v1h-1zM0 3h1v1h-1zM13 3h1v1h-1zM0 4h1v1h-1zM13 4h1v1h-1zM0 5h1v1h-1zM13 5h1v1h-1zM0 6h1v1h-1zM13 6h1v1h-1zM0 7h1v1h-1zM13 7h1v1h-1zM0 8h1v1h-1zM13 8h1v1h-1zM0 9h1v1h-1zM13 9h1v1h-1zM0 10h1v1h-1zM13 10h1v1h-1zM1 11h1v1h-1zM12 11h1v1h-1zM2 12h1v1h-1zM11 12h1v1h-1zM3 13h8v1h-8z"/><path fill="#4d0c0c" shape-rendering="crispEdges" d="M7 4h2v1h-2zM6 5h1v1h-1zM5 6h3v1h-3zM6 7h1v1h-1zM6 8h1v1h-1zM6 9h1v1h-1z"/></svg><div class="t g" style="left:616px;top:114px;color:#4a4a4a;">MetadataFea…</div>
<div class="t" style="left:5px;top:152px;color:#46566e;width:23px;text-align:center;">2</div>
<svg class="ic" style="left:38px;top:152px" width="14" height="14" viewBox="0 0 14 14"><rect x="1" y="1" width="12" height="1" fill="#cfe9cf"/><rect x="1" y="3" width="12" height="10" fill="#f7fcf7"/><path fill="#0f3f0f" shape-rendering="crispEdges" d="M0 0h14v1h-14zM0 1h1v1h-1zM13 1h1v1h-1zM0 2h14v1h-14zM0 3h1v1h-1zM13 3h1v1h-1zM0 4h1v1h-1zM13 4h1v1h-1zM0 5h1v1h-1zM13 5h1v1h-1zM0 6h1v1h-1zM13 6h1v1h-1zM0 7h1v1h-1zM13 7h1v1h-1zM0 8h1v1h-1zM13 8h1v1h-1zM0 9h1v1h-1zM13 9h1v1h-1zM0 10h1v1h-1zM13 10h1v1h-1zM0 11h1v1h-1zM13 11h1v1h-1zM0 12h1v1h-1zM13 12h1v1h-1zM0 13h14v1h-14z"/><path fill="#0f3f0f" shape-rendering="crispEdges" d="M3 5h2v1h-2zM7 5h3v1h-3zM5 6h1v1h-1zM7 6h1v1h-1zM10 6h1v1h-1zM5 7h1v1h-1zM7 7h1v1h-1zM10 7h1v1h-1zM5 8h1v1h-1zM7 8h3v1h-3zM5 9h1v1h-1zM7 9h1v1h-1zM3 10h2v1h-2zM7 10h1v1h-1z"/></svg><div class="t g" style="left:60px;top:152px;color:#4a4a4a;">AirDrone</div>
<div class="t g" style="left:149px;top:152px;color:#4a4a4a;">0.7</div>
<svg class="ic" style="left:259px;top:152px" width="14" height="14" viewBox="0 0 14 14"><defs><linearGradient id="g19" x1="0" y1="0" x2="0" y2="1"><stop offset="0" stop-color="#ebe8f7"/><stop offset="1" stop-color="#ddd8f1"/></linearGradient></defs><path d="M2.5 1H11.5L13 2.5V11.5L11.5 13H2.5L1 11.5V2.5Z" fill="url(#g19)"/><path d="M3.2 1.6H10.8L12.4 3.2V10.8L10.8 12.4H3.2L1.6 10.8V3.2Z" fill="none" stroke="#fff" stroke-opacity=".75" stroke-width="1"/><path fill="#12105a" shape-rendering="crispEdges" d="M3 0h8v1h-8zM2 1h1v1h-1zM11 1h1v1h-1zM1 2h1v1h-1zM12 2h1v1h-1zM0 3h1v1h-1zM13 3h1v1h-1zM0 4h1v1h-1zM13 4h1v1h-1zM0 5h1v1h-1zM13 5h1v1h-1zM0 6h1v1h-1zM13 6h1v1h-1zM0 7h1v1h-1zM13 7h1v1h-1zM0 8h1v1h-1zM13 8h1v1h-1zM0 9h1v1h-1zM13 9h1v1h-1zM0 10h1v1h-1zM13 10h1v1h-1zM1 11h1v1h-1zM12 11h1v1h-1zM2 12h1v1h-1zM11 12h1v1h-1zM3 13h8v1h-8z"/><path fill="#12105a" shape-rendering="crispEdges" d="M6 4h2v1h-2zM5 5h1v1h-1zM8 5h1v1h-1zM5 6h1v1h-1zM8 6h1v1h-1zM5 7h3v1h-3zM5 8h1v1h-1zM6 9h2v1h-2z"/></svg><div class="t g" style="left:278px;top:152px;color:#4a4a4a;">enum Floating</div>
<div class="t g" style="left:373px;top:152px;color:#4a4a4a;">10890.605</div>
<div class="t g" style="left:486px;top:152px;color:#4a4a4a;">9000.5</div>
<svg class="ic" style="left:597px;top:140px" width="14" height="14" viewBox="0 0 14 14"><defs><linearGradient id="g20" x1="0" y1="0" x2="0" y2="1"><stop offset="0" stop-color="#fdeef1"/><stop offset="1" stop-color="#fbdfe4"/></linearGradient></defs><path d="M2.5 1H11.5L13 2.5V11.5L11.5 13H2.5L1 11.5V2.5Z" fill="url(#g20)"/><path d="M3.2 1.6H10.8L12.4 3.2V10.8L10.8 12.4H3.2L1.6 10.8V3.2Z" fill="none" stroke="#fff" stroke-opacity=".75" stroke-width="1"/><path fill="#4d0c0c" shape-rendering="crispEdges" d="M3 0h8v1h-8zM2 1h1v1h-1zM11 1h1v1h-1zM1 2h1v1h-1zM12 2h1v1h-1zM0 3h1v1h-1zM13 3h1v1h-1zM0 4h1v1h-1zM13 4h1v1h-1zM0 5h1v1h-1zM13 5h1v1h-1zM0 6h1v1h-1zM13 6h1v1h-1zM0 7h1v1h-1zM13 7h1v1h-1zM0 8h1v1h-1zM13 8h1v1h-1zM0 9h1v1h-1zM13 9h1v1h-1zM0 10h1v1h-1zM13 10h1v1h-1zM1 11h1v1h-1zM12 11h1v1h-1zM2 12h1v1h-1zM11 12h1v1h-1zM3 13h8v1h-8z"/><path fill="#4d0c0c" shape-rendering="crispEdges" d="M5 4h1v1h-1zM8 4h1v1h-1zM4 5h1v1h-1zM6 5h2v1h-2zM9 5h1v1h-1zM4 6h1v1h-1zM7 6h1v1h-1zM9 6h1v1h-1zM4 7h1v1h-1zM7 7h1v1h-1zM9 7h1v1h-1zM4 8h1v1h-1zM7 8h1v1h-1zM9 8h1v1h-1zM4 9h1v1h-1zM7 9h1v1h-1zM9 9h1v1h-1z"/></svg><div class="t g" style="left:616px;top:140px;color:#4a4a4a;">MetadataUsa…</div>
<svg class="ic" style="left:597px;top:164px" width="14" height="14" viewBox="0 0 14 14"><defs><linearGradient id="g21" x1="0" y1="0" x2="0" y2="1"><stop offset="0" stop-color="#fdeef1"/><stop offset="1" stop-color="#fbdfe4"/></linearGradient></defs><path d="M2.5 1H11.5L13 2.5V11.5L11.5 13H2.5L1 11.5V2.5Z" fill="url(#g21)"/><path d="M3.2 1.6H10.8L12.4 3.2V10.8L10.8 12.4H3.2L1.6 10.8V3.2Z" fill="none" stroke="#fff" stroke-opacity=".75" stroke-width="1"/><path fill="#4d0c0c" shape-rendering="crispEdges" d="M3 0h8v1h-8zM2 1h1v1h-1zM11 1h1v1h-1zM1 2h1v1h-1zM12 2h1v1h-1zM0 3h1v1h-1zM13 3h1v1h-1zM0 4h1v1h-1zM13 4h1v1h-1zM0 5h1v1h-1zM13 5h1v1h-1zM0 6h1v1h-1zM13 6h1v1h-1zM0 7h1v1h-1zM13 7h1v1h-1zM0 8h1v1h-1zM13 8h1v1h-1zM0 9h1v1h-1zM13 9h1v1h-1zM0 10h1v1h-1zM13 10h1v1h-1zM1 11h1v1h-1zM12 11h1v1h-1zM2 12h1v1h-1zM11 12h1v1h-1zM3 13h8v1h-8z"/><path fill="#4d0c0c" shape-rendering="crispEdges" d="M7 4h2v1h-2zM6 5h1v1h-1zM5 6h3v1h-3zM6 7h1v1h-1zM6 8h1v1h-1zM6 9h1v1h-1z"/></svg><div class="t g" style="left:616px;top:164px;color:#4a4a4a;">MetadataFea…</div>
<svg class="ic" style="left:706px;top:92px" width="10" height="6" viewBox="0 0 10 6"><path d="M5 0L10 6H0Z" fill="#c9c9c9"/></svg>
<svg class="ic" style="left:706px;top:175px" width="10" height="6" viewBox="0 0 10 6"><path d="M0 0H10L5 6Z" fill="#c9c9c9"/></svg>
<div class="r" style="left:5px;top:188px;width:713px;height:1px;background:#b6b8be;"></div>
<div class="t g" style="left:12px;top:195px;color:#4a4a4a;">Total Rows: 2</div>
<div class="t g" style="left:92.2px;top:195px;color:#4a4a4a;">Total Visible Rows: 2</div>
</div>
</body></html>
